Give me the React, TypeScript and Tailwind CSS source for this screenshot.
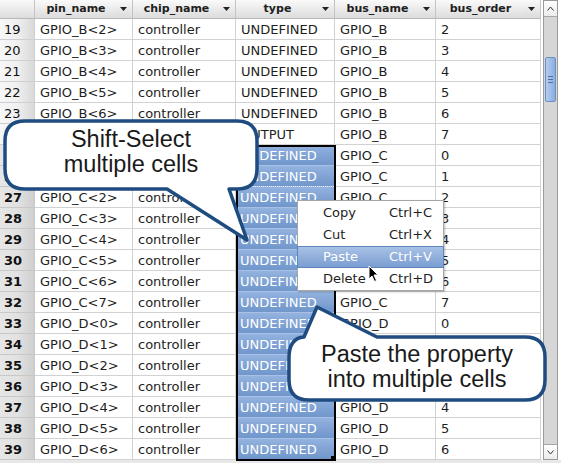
import React from "react";

type Row = {
  n: number;
  pin: string;
  type: string;
  bus: string;
  order: string;
  sel: boolean;
};

const rows: Row[] = Array.from({ length: 21 }, (_, k) => {
  const n = 19 + k;
  const idx = n - 17;
  const letter = "BCD"[Math.floor(idx / 8)];
  const num = idx % 8;
  return {
    n,
    pin: `GPIO_${letter}<${num}>`,
    type: n === 24 ? "OUTPUT" : "UNDEFINED",
    bus: `GPIO_${letter}`,
    order: String(num),
    sel: n >= 25,
  };
});

const cols = [
  { key: "pin", label: "pin_name", w: "w-[98px]" },
  { key: "chip", label: "chip_name", w: "w-[103px]" },
  { key: "type", label: "type", w: "w-[99px]" },
  { key: "bus", label: "bus_name", w: "w-[101px]" },
  { key: "order", label: "bus_order", w: "w-[105px]" },
];

function HeaderCell({ label, w }: { label: string; w: string }) {
  return (
    <div className={`${w} h-full flex items-center border-r border-[#c4c4c4] pr-[3px]`}>
      <span className="flex-1 text-center text-[11px] font-bold text-[#202020]">{label}</span>
      <span className="w-[12px] h-[13px] flex items-center justify-center bg-gradient-to-b from-[#f4f4f4] to-[#dedede]">
        <svg width="7" height="4" viewBox="0 0 7 4">
          <path d="M0 0 H7 L3.5 4 Z" fill="#222" />
        </svg>
      </span>
    </div>
  );
}

function Cell({ w, children, sel }: { w: string; children: React.ReactNode; sel?: boolean }) {
  return (
    <div
      className={
        sel
          ? `${w} h-full flex items-center pl-[4px] border-b border-[#a9c1e6] bg-gradient-to-b from-[#93b2df] to-[#7096cb] text-white`
          : `${w} h-full flex items-center pl-[5px] border-r border-b border-[#d2d2d2] text-[#1e1e1e]`
      }
    >
      {children}
    </div>
  );
}

function Scrollbar() {
  return (
    <div className="w-[15px] h-[460px] flex flex-col border border-[#9a9a9a] bg-[#d6d6d6] mt-[0px]">
      <div className="h-[16px] bg-gradient-to-b from-white to-[#ececec] border-b border-[#a8a8a8] flex items-center justify-center">
        <svg width="7" height="5" viewBox="0 0 7 5">
          <path d="M0.5 4.5 L3.5 1 L6.5 4.5" stroke="#333" strokeWidth="1" fill="none" />
        </svg>
      </div>
      <div className="flex-1 px-[1px]">
        <div className="mt-[40px] h-[45px] rounded-[2px] border border-[#6b8fc4] bg-gradient-to-r from-[#b5cdef] to-[#8aaee0] flex flex-col items-center justify-center gap-[2px]">
          <div className="w-[5px] h-[1px] bg-[#4c6fa6]" />
          <div className="w-[5px] h-[1px] bg-[#4c6fa6]" />
          <div className="w-[5px] h-[1px] bg-[#4c6fa6]" />
        </div>
      </div>
      <div className="h-[15px] bg-gradient-to-b from-white to-[#ececec] border-t border-[#a8a8a8] flex items-center justify-center">
        <svg width="7" height="5" viewBox="0 0 7 5">
          <path d="M0.5 0.5 L3.5 4 L6.5 0.5" stroke="#333" strokeWidth="1" fill="none" />
        </svg>
      </div>
    </div>
  );
}

export default function App() {
  return (
    <div className="relative w-[561px] h-[463px] overflow-hidden bg-[#e8e8e8] font-['DejaVu_Sans',sans-serif]">
      <div className="flex bg-white">
        {/* Table */}
        <div className="w-[541px] flex flex-col">
          {/* Header */}
          <div className="h-[19px] flex bg-gradient-to-b from-[#fafafa] to-[#dcdcdc] border-b border-[#b8b8b8]">
            <div className="w-[35px] h-full border-r border-[#c4c4c4]" />
            {cols.map((c) => (
              <HeaderCell key={c.key} label={c.label} w={c.w} />
            ))}
          </div>

          {/* Rows */}
          {rows.map((r) => (
            <div key={r.n} className="h-[21px] flex text-[13px] leading-none">
              <div
                className={
                  r.sel
                    ? "w-[35px] h-full flex items-center pl-[4px] font-bold text-[#111] border-b border-r border-[#c8c8c8] bg-gradient-to-r from-[#e6e6e6] via-[#e2e2e2] to-[#cfcfcf]"
                    : "w-[35px] h-full flex items-center pl-[4px] text-[#111] border-b border-r border-[#cfcfcf] bg-gradient-to-r from-[#f7f7f7] via-[#f0f0f0] to-[#d9d9d9]"
                }
              >
                {r.n}
              </div>
              <Cell w="w-[98px]">{r.pin}</Cell>
              <Cell w="w-[103px]">controller</Cell>
              <Cell w="w-[99px]" sel={r.sel}>
                {r.type}
              </Cell>
              <Cell w="w-[101px]">{r.bus}</Cell>
              <Cell w="w-[105px]">{r.order}</Cell>
            </div>
          ))}
        </div>
        <div className="w-[2px]" />
        <Scrollbar />
        <div className="flex-1" />
      </div>

      {/* Selection outline + fill handle */}
      <div className="absolute left-[236px] top-[145px] w-[100px] h-[316px] border-2 border-black pointer-events-none" />
      <div className="absolute left-[331px] top-[456px] w-[5px] h-[5px] bg-black" />
      <div className="absolute left-[238px] top-[186px] w-[96px] border-t border-dotted border-[#e8eefa]" />

      {/* Callouts */}
      <svg className="absolute left-0 top-0" width="561" height="463" viewBox="0 0 561 463">
        <path
          d="M25 121 H237 Q257 121 257 141 V169 Q257 189 237 189 H229 L247 240 L167 189 H25 Q5 189 5 169 V141 Q5 121 25 121 Z"
          fill="white"
          stroke="#1f4c80"
          strokeWidth="3.5"
          strokeLinejoin="round"
        />
        <path
          d="M289 358 Q289 338 304 337 L317 307 L377 337 H525 Q545 337 545 357 V380 Q545 400 525 400 H309 Q289 400 289 380 Z"
          fill="white"
          stroke="#1f4c80"
          strokeWidth="3.5"
          strokeLinejoin="round"
        />
      </svg>
      <div className="absolute left-[5px] top-[127px] w-[252px] flex flex-col items-center font-['Liberation_Sans',Arial,sans-serif] text-[23.5px] leading-[25px] text-[#1a1a1a]">
        <span>Shift-Select</span>
        <span>multiple cells</span>
      </div>
      <div className="absolute left-[289px] top-[342px] w-[256px] flex flex-col items-center font-['Liberation_Sans',Arial,sans-serif] text-[23.5px] leading-[25px] text-[#1a1a1a]">
        <span>Paste the property</span>
        <span>into multiple cells</span>
      </div>

      {/* Context menu */}
      <div className="absolute left-[297px] top-[200px] w-[147px] h-[91px] bg-white border border-[#a6a6a6] shadow-[1px_1px_2px_rgba(0,0,0,0.25)] py-[1px] text-[13px] text-[#1e1e1e]">
        {[
          ["Copy", "Ctrl+C"],
          ["Cut", "Ctrl+X"],
          ["Paste", "Ctrl+V"],
          ["Delete", "Ctrl+D"],
        ].map(([a, b]) => (
          <div
            key={a}
            className={
              a === "Paste"
                ? "h-[22px] flex items-center border border-[#5f85bd] bg-gradient-to-b from-[#a9c2e6] to-[#7a9dd1] text-white -mx-[1px]"
                : "h-[22px] flex items-center"
            }
          >
            <span className="w-[91px] pl-[25px]">{a}</span>
            <span>{b}</span>
          </div>
        ))}
      </div>

      {/* Mouse cursor */}
      <svg className="absolute left-[368px] top-[265px]" width="12" height="18" viewBox="0 0 12 18">
        <path
          d="M1 1 V14 L4 11 L6.5 16.5 L8.5 15.5 L6 10 H10 Z"
          fill="black"
          stroke="white"
          strokeWidth="1"
          strokeLinejoin="round"
        />
      </svg>
    </div>
  );
}
